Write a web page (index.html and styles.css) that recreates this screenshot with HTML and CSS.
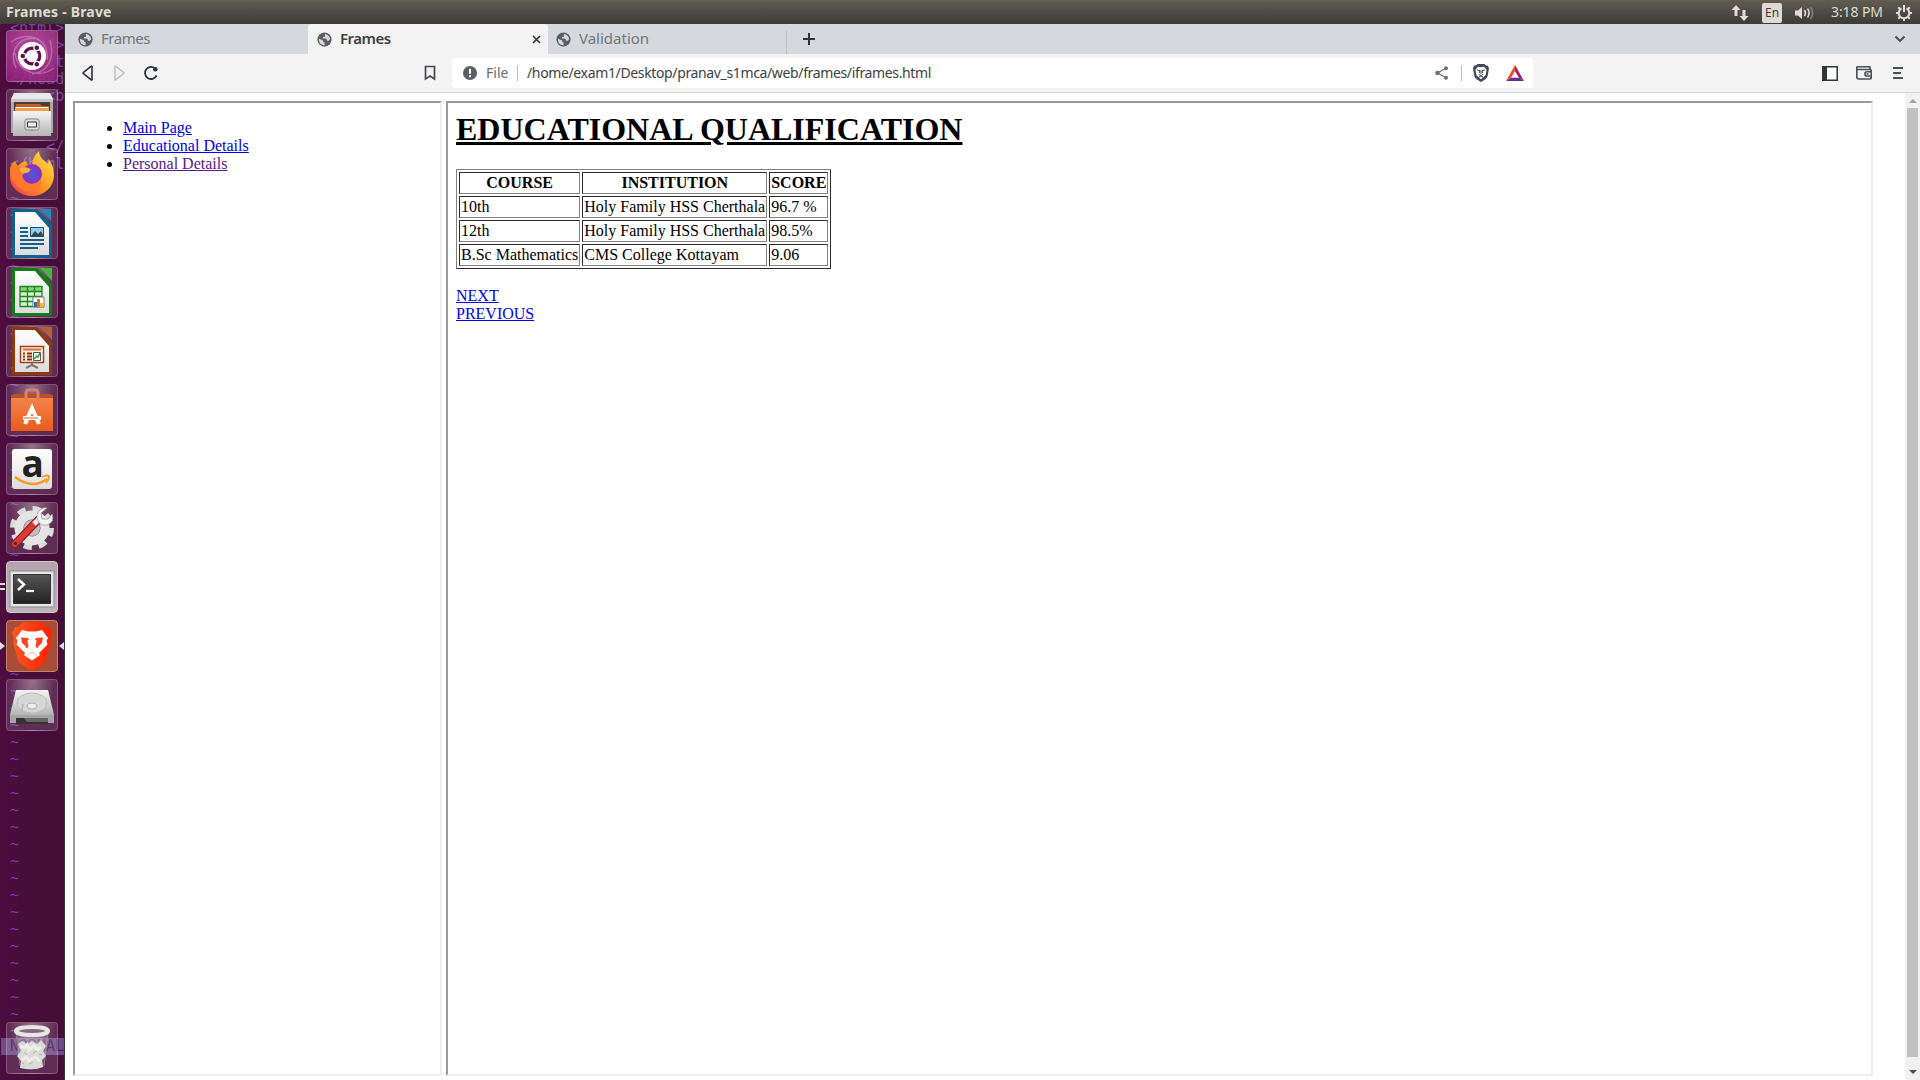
FILE: index.html
```html
<!DOCTYPE html>
<html lang="en">
<head>
<meta charset="utf-8">
<title>Frames</title>
<link rel="stylesheet" href="styles.css">
</head>
<body>
<svg width="0" height="0" class="defs">
  <defs>
    <linearGradient id="silver" x1="0" y1="0" x2="0" y2="1"><stop offset="0" stop-color="#f4f4f4"/><stop offset="1" stop-color="#b5b5b5"/></linearGradient>
    <linearGradient id="paper" x1="0" y1="0" x2="0" y2="1"><stop offset="0" stop-color="#fff"/><stop offset="1" stop-color="#dcdcdc"/></linearGradient>
    <linearGradient id="flame" x1="1" y1="0" x2="0" y2="1"><stop offset="0" stop-color="#ffe84a"/><stop offset=".5" stop-color="#ff9a1f"/><stop offset="1" stop-color="#f9304a"/></linearGradient>
    <linearGradient id="lion" x1="0" y1="0" x2="1" y2="0"><stop offset="0" stop-color="#ff5722"/><stop offset="1" stop-color="#ff2000"/></linearGradient>
    <linearGradient id="bag" x1="0" y1="0" x2="0" y2="1"><stop offset="0" stop-color="#f3894f"/><stop offset="1" stop-color="#ec5b1c"/></linearGradient>
    <linearGradient id="screen" x1="0" y1="0" x2="0" y2="1"><stop offset="0" stop-color="#565656"/><stop offset="1" stop-color="#222"/></linearGradient>
    <radialGradient id="orb"><stop offset="0" stop-color="#4b5bd8"/><stop offset="1" stop-color="#8a2fc4"/></radialGradient>
    <symbol id="globe" viewBox="0 0 16 16"><circle cx="8" cy="8" r="7.6" fill="#5a5d63"/><path d="M2.2 7.2 6.6 9v1.6l1.5.4v3.3C4.4 14.2 1.4 11 2.2 7.200zM8.400 2.200C11.600 2.500 13.800 4.800 14 7.800L12.400 9.300H10.500V7.700L9 6.800H6.300V5.400H8.400z" fill="#d5d9dd"/></symbol>
  </defs>
</svg>

<header class="panel">
  <span class="panel-title">Frames - Brave</span>
  <div class="indicators">
    <svg class="net" width="18" height="18" viewBox="0 0 18 18"><path d="M5 1 9.500 6H6.500v6H3.500V6H.5zM13 17 8.500 12h3V6h3v6h3z" fill="#dfdbd2"/></svg>
    <span class="lang">En</span>
    <svg class="vol" width="20" height="18" viewBox="0 0 20 18"><path d="M0 6.500h3L7 3v12l-4-3.500H0z" fill="#dfdbd2"/><g fill="none" stroke-width="1.500"><path d="M9.500 6q2 3 0 6M12.500 4.500q3.300 4.500 0 9" stroke="#dfdbd2"/><path d="M15.500 3q4.300 6 0 12" stroke="#85827a"/></g></svg>
    <span class="clock">3:18 PM</span>
    <svg class="gear" width="18" height="18" viewBox="0 0 18 18" fill="none" stroke="#dfdbd2"><path d="M6.500 4.300a5.300 5.300 0 1 0 5 0" stroke-width="2"/><path d="M9 1v7M1 9h3M14 9h3M9 14v3M3.200 3.200l2 2M14.800 3.200l-2 2M3.200 14.800l2-2M14.800 14.800l-2-2" stroke-width="2"/></svg>
  </div>
</header>

<div class="desktop">
  <aside class="launcher">
    <pre class="terminal-code">&lt;html&gt;
&lt;head&gt;
  &lt;tit
&lt;/head
    &lt;b


    &lt;/
&lt;/html</pre>
    <pre class="terminal-tildes">~
~
~
~
~
~
~
~
~
~
~
~
~
~
~
~
~
~
~
~
~
~
~
~
~
~
~
~
~
~
~
~
~
~
~
~
~
~
~
~
~
~
~
~
~
~
~
~
~
~</pre>
    <div class="terminal-status">NORMAL</div>

    <div class="tile dash"><svg viewBox="0 0 52 52"><g fill="none" stroke="#e3a5d4" stroke-opacity=".45" stroke-width="1.500"><path d="M10 38C2 20 14 5 33 9M44 10c5 17-1 32-18 34M5 12C20 0 44 8 41 30M48 38C34 48 12 44 9 23"/></g><circle cx="26" cy="26" r="14" fill="#fff"/><circle cx="26" cy="26" r="7.800" fill="none" stroke="#5e1350" stroke-width="3.200"/><g fill="#5e1350" stroke="#fff" stroke-width="1.200"><circle cx="16.800" cy="26" r="2.900"/><circle cx="30.800" cy="17.700" r="2.900"/><circle cx="30.800" cy="34.300" r="2.900"/></g></svg></div>
    <div class="tile"><svg viewBox="0 0 52 52"><path d="M8 4h36l3 8v32H5V12z" fill="#a9a9a9"/><path d="M8 4h36l3 6H5z" fill="#e9e9e9"/><path d="M5 10h42v3H5z" fill="#c7c7c7"/><path d="M8 13h36v10H8z" fill="#463d38"/><path d="M10 15h24l2 2h7v6H9z" fill="#c75d28"/><path d="M9 18h34v5H9z" fill="#f2a050"/><path d="M10 18.500h32" stroke="#fff"/><path d="M7 22h38v25H7z" fill="url(#silver)"/><rect x="19" y="30" width="14" height="11" rx="2" fill="#ddd" stroke="#858585"/><path d="M21.500 33h9v5h-9z" fill="#eee" stroke="#333"/></svg></div>
    <div class="tile"><svg viewBox="0 0 52 52"><path d="M4 20q2-5 5-7 1 3 3 5 3-4 8-5l2 4q2-1 4-1 1-8 7-13 0 7 7 11l2 2q1-3 0-5 6 6 6 16c0 12-10 21-22 21S3 39 4 27z" fill="url(#flame)"/><circle cx="26" cy="26" r="10" fill="url(#orb)"/><path d="M5 22q7-5 12-3l6 1q3 2 0 4-6 1-7 4 1 7 9 8 7 0 10-5 1 8-6 12C14 46 4 34 5 22z" fill="#ff7a2b"/><path d="M14 20q5-2 10 1 0 4-6 4-4 1-4-5z" fill="#ffb03a"/></svg></div>
    <div class="tile"><svg viewBox="0 0 52 52"><path d="M6 2h25l15 16v33H6z" fill="#116090"/><path d="M34 2h11v12z" fill="#2a85b7"/><path d="M9 5h20l14 16v27H9z" fill="url(#paper)"/><path d="M14 21h8M14 25h8M14 29h8M14 33h24M14 37h24M14 41h18" stroke="#155f8f" stroke-width="2"/><path d="M24.500 20.500h13v9h-13z" fill="#8fd0f0" stroke="#12517d"/><path d="m25 29 4-5 3 3 3-3 2.500 5z" fill="#394449"/></svg></div>
    <div class="tile"><svg viewBox="0 0 52 52"><path d="M6 2h25l15 16v32H6z" fill="#157b18"/><path d="M34 2h12v13z" fill="#42b83c"/><path d="M9 5h20l14 16v26H9z" fill="url(#paper)"/><path d="M14 20.500h22v20H14z" fill="#d8f5d0"/><path d="M14 20.500h22v5H14z" fill="#82d476"/><path d="M14 20.500h22v20H14zM14 25.500h22M14 30.500h22M14 35.500h22M21.500 20v20M28.500 20v20" fill="none" stroke="#1b8520" stroke-width="1.300"/><path d="M27 31h11v10H27z" fill="#fff" stroke="#777"/><path d="M28 36h3v5h-3z" fill="#2b6fb5"/><path d="M31 33h3v8h-3z" fill="#ef6a23"/><path d="M34 37h3v4h-3z" fill="#f5bd22"/></svg></div>
    <div class="tile"><svg viewBox="0 0 52 52"><path d="M6 2h25l15 16v32H6z" fill="#8d3a11"/><path d="M34 2h12v13z" fill="#b5602f"/><path d="M9 5h20l14 16v26H9z" fill="url(#paper)"/><path d="M14.500 21.500h23v16h-23z" fill="#fff1e6" stroke="#a34416" stroke-width="1.500"/><path d="M17 24.500h18" stroke="#d56f37" stroke-width="2"/><path d="M17 28.500h2M17 31.500h2M17 34.500h2M21 28.500h5M21 31.500h5M21 34.500h5" stroke="#833312" stroke-width="2"/><path d="M27.500 27.500h7v8h-7z" fill="#fff" stroke="#555"/><path d="m28 34 3-3 1 1 2-4" stroke="#2b9a36" fill="none" stroke-width="1.500"/><path d="M26 38v2l-6 3M26 40l6 3" stroke="#777" fill="none" stroke-width="2"/></svg></div>
    <div class="tile"><svg viewBox="0 0 52 52"><path d="M5 12 9 10h34l4 2v35H5z" fill="url(#bag)"/><path d="M5 12 9 10h34l4 2v2H5z" fill="#bd4f27"/><path d="M20 17V9q0-3 3-3h6q3 0 3 3v8" fill="none" stroke="#d98263" stroke-width="3"/><path d="m19 40 7-16 7 16" fill="none" stroke="#fff" stroke-width="4"/><path d="M17 34h18" stroke="#fff" stroke-width="4"/><path d="M18 34h14" stroke="#e9632c"/></svg></div>
    <div class="tile"><svg viewBox="0 0 52 52"><rect x="6" y="6" width="40" height="40" rx="3" fill="url(#paper)"/><text x="15.500" y="33.500" class="amazon-a">a</text><path d="M9 34q17 13 32 2" fill="none" stroke="#f79a1f" stroke-width="2.500"/><path d="M36 34q7-3 7 0t-3 6" fill="none" stroke="#f79a1f" stroke-width="1.800"/></svg></div>
    <div class="tile"><svg viewBox="0 0 52 52"><circle cx="26" cy="26" r="19" fill="none" stroke="#dcdcdc" stroke-width="6" stroke-dasharray="8 6.920"/><circle cx="26" cy="26" r="13" fill="none" stroke="#e4e4e4" stroke-width="9"/><circle cx="26" cy="26" r="8" fill="#bfbfbf"/><path d="m9 42 23-24" stroke="#8f1515" stroke-width="8" stroke-linecap="round"/><path d="m9 42 23-24" stroke="#d83a35" stroke-width="6" stroke-linecap="round"/><path d="m28 22 8-8" stroke="#eee" stroke-width="5"/><path d="m41 6-6 5 1 6 6 0 4-5q3 8-5 11-7 1-9-4-3-7 3-12 3-2 6-1z" fill="#f3f3f3" stroke="#999" stroke-width=".8"/><circle cx="9.500" cy="41.500" r="1.500" fill="#571414"/></svg></div>
    <div class="tile terminal"><svg viewBox="0 0 52 52"><path d="M4 10h44v36H4z" fill="#e5e5e5" stroke="#888"/><path d="M7.500 13.500h37v29h-37z" fill="url(#screen)" stroke="#333"/><path d="m12 18 6 5.500-6 5.500" fill="none" stroke="#fff" stroke-width="2.400"/><path d="M20 30h8" stroke="#fff" stroke-width="2.200"/></svg><i class="pips"></i></div>
    <div class="tile brave"><svg viewBox="0 0 52 52"><path d="M17 2h18l5 5 3 0 3 6-2 5 1 4-5 18q-1 3-6 6l-8 5-8-5q-5-3-6-6L7 22l1-4-2-5 3-6h3z" fill="url(#lion)"/><path d="m16 10 6 1.500h8l6-1.500 6 8-1.500 3 1 3.500L33 33l1 2-2 1.500-6-5-6 5-2-1.500 1-2-8.500-8.500 1-3.500L10 18z" fill="#fff"/><path d="m15 17.500 7 .5 1 1.500-1.500 1 1 6-2 2q-1-3-4.500-5.500zM37 17.500l-7 .5-1 1.500 1.500 1-1 6 2 2q1-3 4.500-5.500z" fill="#fb4720"/><path d="m20 36.500 6-4.500 6 4.500-6 4z" fill="#fff"/></svg><i class="arrow-left"></i><i class="arrow-right"></i></div>
    <div class="tile"><svg viewBox="0 0 52 52"><path d="M10 11h32l6 25v8H4v-8z" fill="#777"/><path d="M10 11h32l6 25H4z" fill="url(#silver)"/><ellipse cx="26" cy="24" rx="15" ry="10" fill="#d7d7d7" stroke="#bbb"/><ellipse cx="26" cy="27" rx="5" ry="3" fill="#eee" stroke="#aaa"/><path d="m15 37 2-12" stroke="#bbb" stroke-width="2"/><path d="M4 36h44v8H4z" fill="#a4a4a4"/><path d="M10 39h32v6H10z" fill="#333"/><path d="M18 39h24v4H21z" fill="#666"/></svg></div>
    <div class="tile trash"><svg viewBox="0 0 52 52"><path d="M10 10h32l-4 34q-12 6-24 0z" fill="#fff" fill-opacity=".15" stroke="#aaa" stroke-opacity=".5"/><path d="m12 22 4-3 5 3 5-3 5 3 4-4 5 6-3 5 3 5-4 4 1 7q-10 4-23 1l1-7-4-5 4-5z" fill="#dadad6"/><path d="m14 24 4 2 3-3 2 5 5-4 3 4 4-3M16 38l4-3 3 4 6-4 5 4" fill="none" stroke="#ededea" stroke-width="3"/><path d="m18 30 3 3m6-2 4-2m-8 13 4-2m6-8 3 1m-20 8 2 1" stroke="#b4b4b0"/><ellipse cx="26" cy="9" rx="16" ry="4" fill="#8b6580" stroke="#e6e6e3" stroke-width="4"/></svg></div>
  </aside>

  <main class="browser">
    <nav class="tabs">
      <div class="tab first"><svg class="globe"><use href="#globe"/></svg><span>Frames</span></div>
      <div class="tab active"><svg class="globe"><use href="#globe"/></svg><span>Frames</span><svg class="close" width="9" height="9" viewBox="0 0 9 9"><path d="m1 1 7 7M8 1 1 8" stroke="#3a3d41" stroke-width="1.700"/></svg></div>
      <div class="tab last"><svg class="globe"><use href="#globe"/></svg><span class="valid">Validation</span></div>
      <svg class="plus" width="12" height="12" viewBox="0 0 12 12"><path d="M6 0v12M0 6h12" stroke="#303338" stroke-width="2"/></svg>
      <svg class="chevron" width="12" height="8" viewBox="0 0 12 8"><path d="m1.500 1.500 4.500 4.500 4.500-4.500" fill="none" stroke="#44474b" stroke-width="1.800"/></svg>
    </nav>
    <div class="toolbar">
      <svg class="back" width="12" height="16" viewBox="0 0 12 16"><path d="M10 1.500v13q0 1-1 .2L1.500 8.700q-.8-.7 0-1.400L9 1.300q1-.8 1 .2z" fill="none" stroke="#303338" stroke-width="1.600"/></svg>
      <svg class="forward" width="12" height="16" viewBox="0 0 12 16"><path d="M2 1.500v13q0 1 1 .2l7.500-6q.8-.7 0-1.400L3 1.300q-1-.8-1 .2z" fill="none" stroke="#c0c2c4" stroke-width="1.500"/></svg>
      <svg class="reload" width="16" height="16" viewBox="0 0 16 16"><path d="M12.800 4A6.100 6.100 0 1 0 13.600 10.500" fill="none" stroke="#303338" stroke-width="1.800"/><circle cx="12.300" cy="4.300" r="2.300" fill="#303338"/></svg>
      <svg class="bookmark" width="12" height="16" viewBox="0 0 12 16"><path d="M1.500 1.500h9v12.500L6 11l-4.500 3z" fill="none" stroke="#44474b" stroke-width="1.700"/></svg>
      <div class="address">
        <svg class="info" width="14" height="14" viewBox="0 0 14 14"><circle cx="7" cy="7" r="7" fill="#5b5e66"/><path d="M7 2.800v5M7 9.300v2" stroke="#fff" stroke-width="2"/></svg>
        <span class="scheme">File</span><i class="divider"></i><span class="path">/home/exam1/Desktop/pranav_s1mca/web/frames/iframes.html</span>
        <svg class="share" width="14" height="14" viewBox="0 0 14 14"><path d="M11 2.300 2.500 7l8.500 4.700" fill="none" stroke="#6d7075" stroke-width="1.300"/><g fill="#6d7075"><circle cx="11" cy="2.300" r="2"/><circle cx="2.500" cy="7" r="2.200"/><circle cx="11" cy="11.700" r="2"/></g></svg>
        <i class="divider"></i>
        <svg class="shield" width="16" height="18" viewBox="0 0 16 18"><path d="M4.500 0h7l1.700 1.500h1.500L16 4l-1.300 8q-.5 2-2.200 3.200L8 18l-4.500-2.800Q1.800 14 1.300 12L0 4l1.300-2.500h1.500z" fill="#454659"/><path d="m5 2.700 3 .6 3-.6 2.500 3L12.700 11 8 15.200 3.300 11 2.500 5.700z" fill="#fff"/><path d="m4 6 3 .6-.8 2.500M12 6 9 6.600l.8 2.500M8 6.500V10M6 10.500l2 1.200 2-1.200M6 13l2-1 2 1" fill="none" stroke="#454659"/></svg>
        <svg class="bat" width="18" height="16" viewBox="0 0 18 16"><path d="M9 0 0 16l5-3.300L9 6z" fill="#ff4724"/><path d="m9 0 9 16-5-3.300L9 6z" fill="#9e1f63"/><path d="m0 16 5-3.300h8L18 16z" fill="#662d91"/></svg>
      </div>
      <div class="tools">
        <svg width="16" height="15" viewBox="0 0 16 15"><path d="M.8.8h14.400v13.400H.8z" fill="#fff" stroke="#303338" stroke-width="1.500"/><path d="M1 1h4v13H1z" fill="#303338"/></svg>
        <svg width="16" height="14" viewBox="0 0 16 14"><path d="M14 3V1.500q0-.8-1-.8H2Q.8.700.8 2v9q0 2 2 2h10.500q2 0 2-2V5q0-1.500-1.500-1.500H1" fill="none" stroke="#4c4f57" stroke-width="1.700"/><path d="M15 5.800h-4a2.100 2.100 0 0 0 0 4.200h4M10.500 8h2" fill="none" stroke="#4c4f57" stroke-width="1.500"/></svg>
        <svg width="10" height="12" viewBox="0 0 10 12"><path d="M0 1h10M0 6h8M0 11h10" stroke="#4c4f57" stroke-width="2"/></svg>
      </div>
    </div>
    <div class="viewport">
      <div class="page">
        <section class="frame menu">
          <ul>
            <li><a>Main Page</a></li>
            <li><a>Educational Details</a></li>
            <li><a class="visited">Personal Details</a></li>
          </ul>
        </section>
        <section class="frame content">
          <h1>EDUCATIONAL QUALIFICATION</h1>
          <table border="1">
            <tr><th>COURSE</th><th>INSTITUTION</th><th>SCORE</th></tr>
            <tr><td>10th</td><td>Holy Family HSS Cherthala</td><td>96.7 %</td></tr>
            <tr><td>12th</td><td>Holy Family HSS Cherthala</td><td>98.5%</td></tr>
            <tr><td>B.Sc Mathematics</td><td>CMS College Kottayam</td><td>9.06</td></tr>
          </table>
          <br>
          <a>NEXT</a><br>
          <a>PREVIOUS</a>
        </section>
      </div>
      <div class="scrollbar"><i class="up"></i><i class="thumb"></i><i class="down"></i></div>
    </div>
  </main>
</div>
</body>
</html>
```
FILE: styles.css
```css
* { box-sizing: border-box; }
body { margin: 0; width: 1920px; height: 1080px; overflow: hidden; display: flex; flex-direction: column; font-family: "Noto Sans", sans-serif; }
svg { display: block; flex: none; }
i { display: block; flex: none; }
.defs { position: absolute; }

.panel { height: 24px; flex: none; display: flex; justify-content: space-between; align-items: center; padding: 0 7px 0 6px; background: linear-gradient(#5e5b51, #3d3b37); border-top: 1px solid #625f50; color: #dfdbd2; }
.panel-title { font-size: 14px; font-weight: 700; line-height: 20px; padding-bottom: 2px; letter-spacing: .2px; white-space: nowrap; }
.indicators { display: flex; align-items: center; }
.net { margin-right: 13px; }
.lang { width: 20px; height: 20px; background: #dfdbd2; border-radius: 2px; color: #3d3b37; font-size: 12px; line-height: 19px; text-align: center; margin-right: 13px; }
.vol { margin-right: 16px; }
.clock { width: 53px; font-size: 14px; line-height: 20px; padding-bottom: 2px; white-space: nowrap; letter-spacing: -.1px; margin-right: 11px; }

.desktop { flex: 1; display: flex; min-height: 0; }
.launcher { position: relative; width: 65px; flex: none; display: flex; flex-direction: column; gap: 7px; padding: 6px 6px; background: linear-gradient(90deg, #4e0c3f, #470d39 40%, #470d39); border-right: 1px solid #3a3037; overflow: hidden; }
.terminal-code, .terminal-tildes, .terminal-status { position: absolute; margin: 0; font: 15px/17px "DejaVu Sans Mono", monospace; }
.terminal-code { left: 10px; top: -4px; color: #74479a; }
.terminal-tildes { left: 10px; top: 166px; color: #6a3fae; }
.terminal-status { left: 1px; right: 0; top: 1014px; height: 17px; padding-left: 9px; background: #6d4c88; color: #4a1648; }
.tile { position: relative; width: 52px; height: 52px; flex: none; border-radius: 4px; border: 1px solid rgba(255,255,255,.2); background: radial-gradient(ellipse at 50% 0, rgba(255,255,255,.38), rgba(255,255,255,.08) 65%), rgba(255,255,255,.06); }
.tile svg { width: 52px; height: 52px; margin: -1px; }
.dash { background: radial-gradient(circle at 50% 30%, rgba(184,82,160,.92), rgba(145,32,122,.85)); }
.terminal { background: linear-gradient(#b1a4ae, #bdb4bb); border-color: #cfc7cd; }
.brave { background: #a84d36; border-color: #c4826f; }
.trash { margin-top: auto; }
.amazon-a { font: bold 37px "Open Sans", sans-serif; fill: #222; }
.pips { position: absolute; left: -7px; top: 21px; width: 5px; height: 7px; border: solid #ddd; border-width: 2px 0; }
.arrow-left, .arrow-right { position: absolute; top: 21px; border: 4px solid transparent; }
.arrow-left { left: -7px; border-left: 5px solid #ddd; border-right: 0; }
.arrow-right { right: -7px; border-right: 5px solid #ddd; border-left: 0; }

.browser { flex: 1; min-width: 0; display: flex; flex-direction: column; background: #fff; }
.tabs { height: 30px; flex: none; display: flex; align-items: center; background: #d5d9dd; padding-right: 14px; }
.tab { height: 30px; display: flex; align-items: center; font-size: 15px; color: #72767a; }
.tab span { line-height: 28px; padding-bottom: 2px; white-space: nowrap; letter-spacing: -.45px; }
.tab .valid { letter-spacing: 0; }
.globe { width: 15px; height: 15px; margin-right: 8px; }
.first { width: 243px; padding-left: 13px; }
.active { width: 240px; padding: 0 7px 0 9px; background: #f3f3f3; border-radius: 4px 4px 0 0; color: #3d4044; font-weight: 600; }
.active span { letter-spacing: -.5px; }
.close { margin-left: auto; }
.last { width: 239px; padding-left: 8px; background: linear-gradient(#bcc0c3, #bcc0c3) right bottom / 1px 23px no-repeat; }
.plus { margin-left: 16px; }
.chevron { margin-left: auto; }
.toolbar { height: 39px; flex: none; display: flex; align-items: center; background: #f3f3f3; border-bottom: 1px solid #d6d7d8; padding: 0 17px 0 17px; }
.forward { margin-left: 19px; }
.reload { margin-left: 18px; }
.bookmark { margin-left: 265px; }
.address { margin-left: 16px; width: 1081px; height: 30px; border-radius: 4px; background: #fff; display: flex; align-items: center; padding: 0 9px 0 11px; font-size: 14px; }
.scheme { color: #686c72; margin-left: 9px; width: 31px; padding-bottom: 2px; }
.divider { width: 1px; height: 16px; background: #babcbe; }
.path { color: #3c3e44; margin-left: 9px; padding-bottom: 2px; white-space: nowrap; letter-spacing: -.36px; }
.share { margin-left: auto; margin-right: 12px; }
.shield { margin-left: 11px; }
.bat { margin-left: 17px; }
.tools { margin-left: auto; display: flex; align-items: center; gap: 18px; }
.tools svg:last-child { margin-left: 3px; }

.viewport { flex: 1; display: flex; min-height: 0; }
.page { flex: 1; display: flex; gap: 4px; padding: 8px 0 4px 8px; font: 16px "Liberation Serif", serif; line-height: normal; color: #000; }
.frame { border: 2px solid; border-color: #9a9a9a #eee #eee #9a9a9a; padding: 8px; }
.menu { width: 369px; }
.content { width: 1427px; }
ul { margin: 8px 0; padding-left: 40px; }
a { color: #0000ee; text-decoration: underline; }
.visited { color: #551a8b; }
h1 { font-size: 32px; margin: 0 0 21.44px; text-decoration: underline; }
.scrollbar { width: 15px; background: #f1f1f1; display: flex; flex-direction: column; align-items: center; padding: 6px 0; }
.up { border: 4px solid transparent; border-top: 0; border-bottom: 4px solid #a3a3a3; }
.thumb { width: 11px; height: 949px; margin-top: 5px; background: #c1c1c1; }
.down { margin-top: 13px; border: 4px solid transparent; border-bottom: 0; border-top: 4px solid #505050; }
```
